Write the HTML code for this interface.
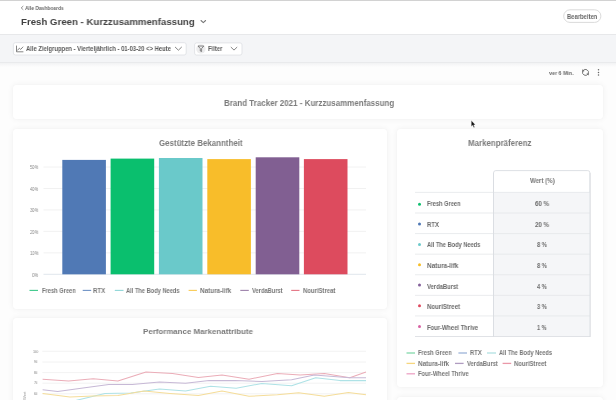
<!DOCTYPE html>
<html><head><meta charset="utf-8">
<style>
html,body{margin:0;padding:0;}
body{width:616px;height:400px;overflow:hidden;position:relative;background:#fdfdfd;font-family:"Liberation Sans",sans-serif;}
.t{position:absolute;white-space:pre;line-height:1;transform-origin:0 0;will-change:transform;}
.card{position:absolute;background:#fff;border-radius:3px;box-shadow:0 0 1px rgba(0,0,0,0.06),0 0 6px rgba(0,0,0,0.06);}
svg{position:absolute;left:0;top:0;}
</style></head><body>
<div style="position:absolute;left:0;top:0;width:616px;height:1px;background:#d2d2d2"></div>
<div style="position:absolute;left:0;top:1px;width:616px;height:33px;background:#fff"></div>
<div style="position:absolute;left:0;top:34px;width:616px;height:27px;background:#f4f5f7;border-top:1px solid #e7e8ea;border-bottom:1px solid #e9eaec"></div>
<div style="position:absolute;left:0;top:63px;width:616px;height:4px;background:linear-gradient(#f2f3f4,#fdfdfd)"></div>

<div class="card" style="left:13px;top:84.5px;width:590px;height:34px"></div>
<div class="card" style="left:13px;top:129px;width:374px;height:179.5px"></div>
<div class="card" style="left:397px;top:129px;width:206px;height:258px"></div>
<div class="card" style="left:13px;top:318px;width:374px;height:120px"></div>
<div class="card" style="left:397px;top:397px;width:206px;height:40px"></div>


<svg width="616" height="400" viewBox="0 0 616 400">
 <rect x="563.7" y="9.8" width="37.2" height="12.6" rx="6.3" fill="#fff" stroke="#d6d6d6" stroke-width="0.9"/>
 <rect x="13.4" y="42.7" width="172.8" height="12.3" rx="2" fill="#fff" stroke="#e0e2e5" stroke-width="0.9"/>
 <rect x="194.6" y="42.9" width="47.4" height="12.2" rx="2" fill="#fff" stroke="#e0e2e5" stroke-width="0.9"/>
 <g fill="none" stroke-linecap="round" stroke-linejoin="round">
  <!-- back chevron -->
  <path d="M23 6.3 L21.2 7.9 L23 9.5" stroke="#777" stroke-width="0.8"/>
  <!-- title chevron -->
  <path d="M201 20.5 L203.3 22.6 L205.6 20.5" stroke="#777" stroke-width="1.05"/>
  <!-- chart icon -->
  <path d="M16.5 46 V51.8 H23" stroke="#666" stroke-width="0.8"/>
  <path d="M17.6 50.2 L19.4 48.2 L20.7 49.4 L22.9 47" stroke="#666" stroke-width="0.8"/>
  <!-- dropdown chevrons -->
  <path d="M175.3 47.2 L178.4 50.2 L181.5 47.2" stroke="#666" stroke-width="0.8"/>
  <path d="M231.1 47.3 L234 50.1 L236.9 47.3" stroke="#666" stroke-width="0.8"/>
 </g>
 <!-- funnel -->
 <circle cx="200.9" cy="48.9" r="4.7" fill="#ececed"/>
 <path d="M198 46 H203.8 L201.6 48.6 V51.6 L200.3 51 V48.6 Z" fill="none" stroke="#6a6a6a" stroke-width="0.8" stroke-linejoin="round"/>
 <!-- refresh -->
 <g fill="none" stroke="#6a6a6a" stroke-width="0.9">
  <path d="M583.14 70.55 A3.0 3.0 0 0 1 588.28 73.52"/>
  <path d="M587.86 74.25 A3.0 3.0 0 0 1 582.72 71.28"/>
 </g>
 <path d="M582.09 71.89 L582.36 69.19 L584.64 70.97 Z" fill="#6a6a6a"/>
 <path d="M588.91 72.91 L588.64 75.61 L586.36 73.83 Z" fill="#6a6a6a"/>
 <!-- kebab -->
 <g fill="#666"><circle cx="598.5" cy="69.7" r="0.75"/><circle cx="598.5" cy="72.4" r="0.75"/><circle cx="598.5" cy="75.1" r="0.75"/></g>

 <!-- bar chart grid -->
 <g stroke="#eeeeee" stroke-width="0.8">
  <line x1="43.5" x2="366" y1="252.85" y2="252.85"/>
  <line x1="43.5" x2="366" y1="231.4" y2="231.4"/>
  <line x1="43.5" x2="366" y1="209.95" y2="209.95"/>
  <line x1="43.5" x2="366" y1="188.5" y2="188.5"/>
  <line x1="43.5" x2="366" y1="167.05" y2="167.05"/>
 </g>
 <line x1="43.5" x2="366" y1="274.3" y2="274.3" stroke="#dde3ea" stroke-width="0.9"/>
 <rect x="62.3" y="159.9" width="43.6" height="114.4" fill="#5079b5"/>
 <rect x="110.6" y="158.6" width="43.6" height="115.7" fill="#0abf6e"/>
 <rect x="158.9" y="158.0" width="43.6" height="116.3" fill="#6ac9ca"/>
 <rect x="207.3" y="159.1" width="43.6" height="115.2" fill="#f8bd2a"/>
 <rect x="255.7" y="157.3" width="43.6" height="117.0" fill="#815f92"/>
 <rect x="303.9" y="159.1" width="43.6" height="115.2" fill="#dd4b5e"/>
 <!-- legend bar chart -->
 <g stroke-width="1.1">
  <line x1="29.5" x2="38" y1="290.4" y2="290.4" stroke="#3ec98b"/>
  <line x1="82.7" x2="91.2" y1="290.4" y2="290.4" stroke="#6f93c6"/>
  <line x1="114.8" x2="123.5" y1="290.4" y2="290.4" stroke="#8fd6d7"/>
  <line x1="188.6" x2="196.9" y1="290.4" y2="290.4" stroke="#f9cb55"/>
  <line x1="240.3" x2="248.8" y1="290.4" y2="290.4" stroke="#9d82ab"/>
  <line x1="291.2" x2="299.5" y1="290.4" y2="290.4" stroke="#e47383"/>
 </g>

 <!-- table -->
 <path d="M493.5 336.5 V173 Q493.5 170.6 495.9 170.6 H587.6 Q590 170.6 590 173 V336.5" fill="#fff" stroke="#d9dde1" stroke-width="0.9"/>
 <rect x="493.5" y="192.4" width="96.5" height="144.1" fill="#f5f6f8"/>
 <g stroke="#e4e7ea" stroke-width="0.8">
  <line x1="415" x2="590" y1="192.4" y2="192.4"/>
  <line x1="415" x2="590" y1="212.99" y2="212.99"/>
  <line x1="415" x2="590" y1="233.58" y2="233.58"/>
  <line x1="415" x2="590" y1="254.17" y2="254.17"/>
  <line x1="415" x2="590" y1="274.76" y2="274.76"/>
  <line x1="415" x2="590" y1="295.35" y2="295.35"/>
  <line x1="415" x2="590" y1="315.94" y2="315.94"/>
 </g>
 <line x1="415" x2="590.4" y1="336.5" y2="336.5" stroke="#dcdfe3" stroke-width="0.9"/>
 <line x1="493.5" x2="493.5" y1="173" y2="336.9" stroke="#d9dde1" stroke-width="0.9"/>
 <line x1="590" x2="590" y1="173" y2="336.9" stroke="#d9dde1" stroke-width="0.9"/>
 <g>
  <circle cx="419.5" cy="204.3" r="1.5" fill="#10c070"/>
  <circle cx="419.5" cy="224.0" r="1.5" fill="#4f78b5"/>
  <circle cx="419.5" cy="244.4" r="1.5" fill="#6ccacb"/>
  <circle cx="419.5" cy="264.8" r="1.5" fill="#f7bd25"/>
  <circle cx="419.5" cy="285.0" r="1.5" fill="#83609a"/>
  <circle cx="419.5" cy="305.8" r="1.5" fill="#de4a5f"/>
  <circle cx="419.5" cy="326.6" r="1.5" fill="#d862a3"/>
 </g>
 <!-- legend table -->
 <g stroke-width="1.3">
  <line x1="406.5" x2="415" y1="353" y2="353" stroke="#82d8aa"/>
  <line x1="458.4" x2="467" y1="353" y2="353" stroke="#9db4d8"/>
  <line x1="487" x2="496" y1="353" y2="353" stroke="#b1e0e2"/>
  <line x1="406.5" x2="415" y1="363.4" y2="363.4" stroke="#f6d67e"/>
  <line x1="455" x2="463.6" y1="363.4" y2="363.4" stroke="#b09cc0"/>
  <line x1="502.6" x2="511.2" y1="363.4" y2="363.4" stroke="#ea98a8"/>
  <line x1="406.5" x2="415" y1="373.8" y2="373.8" stroke="#eca2c4"/>
 </g>

 <!-- line chart grid -->
 <g stroke="#efefef" stroke-width="0.8">
  <line x1="42.4" x2="366" y1="351.3" y2="351.3"/>
  <line x1="42.4" x2="366" y1="362" y2="362"/>
  <line x1="42.4" x2="366" y1="372.6" y2="372.6"/>
  <line x1="42.4" x2="366" y1="383.2" y2="383.2"/>
  <line x1="42.4" x2="366" y1="393.8" y2="393.8"/>
 </g>
 <g fill="none" stroke-width="1.05" stroke-linejoin="round">
  <polyline stroke="#ebadb8" points="42.6,379.3 68.6,381.1 93.2,378.8 117.9,381.1 146,372 172.5,373.6 198.4,377.5 222,375 249,379.2 277.4,373.5 300.1,375 324.3,373.5 349.8,377.8 366,372.1"/>
  <polyline stroke="#c7b9d6" points="42.6,389.7 57.7,391.5 83,388 108.8,384.5 132.2,384.5 159.5,381.9 185.5,383.2 209.2,380.6 234.8,380.6 262,381.5 291.6,379.8 314.3,375 349.8,377.8 366,377.8"/>
  <polyline stroke="#aee2e6" points="74,401 77.7,400 104.9,393.6 130.9,393 159.5,388.9 185.5,391 210.6,386.3 236.2,388.3 261.8,383.5 291.6,385.7 315.7,377.8 339.9,380.6 366,380.6"/>
  <polyline stroke="#f5dd9a" points="42.6,393.6 69.9,397 93,396 117.9,395.6 143.9,391 170,393.5 198.4,395.6 222,391.1 249,396.3 277.4,394.8 298.7,392.8 324.3,396.3 348.4,392.6 366,394.8"/>
 </g>
 <!-- cursor -->
 <path d="M471.3 120.6 L471.3 126.4 L472.6 125.2 L473.8 127.6 L474.7 127.2 L473.6 124.9 L475.3 124.7 Z" fill="#111" stroke="#fff" stroke-width="0.3"/>
</svg>
<div class="t" style="left:22.5px;top:400px;font-size:4px;font-weight:normal;color:#999;transform:rotate(-90deg)">Wert</div>
<div class="t" style="left:25.05px;top:5.70px;font-size:5.65px;font-weight:bold;color:#686868;transform:scaleX(0.8710);">Alle Dashboards</div>
<div class="t" style="left:21.22px;top:17.45px;font-size:9.71px;font-weight:bold;color:#424242;transform:scaleX(0.9947);">Fresh Green - Kurzzusammenfassung</div>
<div class="t" style="left:567.39px;top:13.93px;font-size:6.67px;font-weight:bold;color:#686868;transform:scaleX(0.8810);">Bearbeiten</div>
<div class="t" style="left:26.02px;top:46.03px;font-size:6.67px;font-weight:bold;color:#5a5a5a;transform:scaleX(0.8811);">Alle Zielgruppen - Vierteljährlich - 01-03-20 &lt;&gt; Heute</div>
<div class="t" style="left:208.49px;top:46.03px;font-size:6.67px;font-weight:bold;color:#5e5e5e;transform:scaleX(0.8835);">Filter</div>
<div class="t" style="left:548.85px;top:70.77px;font-size:5.80px;font-weight:bold;color:#6a6a6a;transform:scaleX(0.9215);">ver 6 Min.</div>
<div class="t" style="left:223.74px;top:99.03px;font-size:8.55px;font-weight:bold;color:#7b7b7b;transform:scaleX(0.9328);">Brand Tracker 2021 - Kurzzusammenfassung</div>
<div class="t" style="left:158.58px;top:139.49px;font-size:8.84px;font-weight:bold;color:#7b7b7b;transform:scaleX(0.8965);">Gestützte Bekanntheit</div>
<div class="t" style="left:468.45px;top:138.91px;font-size:8.70px;font-weight:bold;color:#7b7b7b;transform:scaleX(0.9113);">Markenpräferenz</div>
<div class="t" style="left:143.35px;top:327.70px;font-size:8.12px;font-weight:bold;color:#7b7b7b;transform:scaleX(0.9757);">Performance Markenattribute</div>
<div class="t" style="left:32.32px;top:272.59px;font-size:5.07px;font-weight:normal;color:#858585;transform:scaleX(0.8634);">0%</div>
<div class="t" style="left:30.16px;top:251.14px;font-size:5.07px;font-weight:normal;color:#858585;transform:scaleX(0.8345);">10%</div>
<div class="t" style="left:30.29px;top:229.69px;font-size:5.07px;font-weight:normal;color:#858585;transform:scaleX(0.8214);">20%</div>
<div class="t" style="left:30.33px;top:208.24px;font-size:5.07px;font-weight:normal;color:#858585;transform:scaleX(0.8172);">30%</div>
<div class="t" style="left:30.42px;top:186.79px;font-size:5.07px;font-weight:normal;color:#858585;transform:scaleX(0.8088);">40%</div>
<div class="t" style="left:30.33px;top:165.34px;font-size:5.07px;font-weight:normal;color:#858585;transform:scaleX(0.8172);">50%</div>
<div class="t" style="left:41.50px;top:287.96px;font-size:6.52px;font-weight:bold;color:#777;transform:scaleX(0.8785);">Fresh Green</div>
<div class="t" style="left:92.57px;top:287.96px;font-size:6.52px;font-weight:bold;color:#777;transform:scaleX(0.9344);">RTX</div>
<div class="t" style="left:126.13px;top:287.96px;font-size:6.52px;font-weight:bold;color:#777;transform:scaleX(0.8753);">All The Body Needs</div>
<div class="t" style="left:199.86px;top:287.96px;font-size:6.52px;font-weight:bold;color:#777;transform:scaleX(0.9729);">Natura-lifk</div>
<div class="t" style="left:252.14px;top:287.96px;font-size:6.52px;font-weight:bold;color:#777;transform:scaleX(0.8778);">VerdaBurst</div>
<div class="t" style="left:302.98px;top:287.96px;font-size:6.52px;font-weight:bold;color:#777;transform:scaleX(0.9126);">NouriStreat</div>
<div class="t" style="left:427.00px;top:201.25px;font-size:6.52px;font-weight:bold;color:#6a6a6a;transform:scaleX(0.8731);">Fresh Green</div>
<div class="t" style="left:534.70px;top:201.25px;font-size:6.52px;font-weight:bold;color:#6a6a6a;transform:scaleX(0.9505);">60 %</div>
<div class="t" style="left:426.98px;top:221.84px;font-size:6.52px;font-weight:bold;color:#6a6a6a;transform:scaleX(0.9184);">RTX</div>
<div class="t" style="left:534.76px;top:221.84px;font-size:6.52px;font-weight:bold;color:#6a6a6a;transform:scaleX(0.9462);">20 %</div>
<div class="t" style="left:427.23px;top:242.43px;font-size:6.52px;font-weight:bold;color:#6a6a6a;transform:scaleX(0.8720);">All The Body Needs</div>
<div class="t" style="left:536.88px;top:242.43px;font-size:6.52px;font-weight:bold;color:#6a6a6a;transform:scaleX(0.8723);">8 %</div>
<div class="t" style="left:426.95px;top:263.02px;font-size:6.52px;font-weight:bold;color:#6a6a6a;transform:scaleX(0.9760);">Natura-lifk</div>
<div class="t" style="left:536.88px;top:263.02px;font-size:6.52px;font-weight:bold;color:#6a6a6a;transform:scaleX(0.8723);">8 %</div>
<div class="t" style="left:427.34px;top:283.61px;font-size:6.52px;font-weight:bold;color:#6a6a6a;transform:scaleX(0.8952);">VerdaBurst</div>
<div class="t" style="left:536.99px;top:283.61px;font-size:6.52px;font-weight:bold;color:#6a6a6a;transform:scaleX(0.8619);">4 %</div>
<div class="t" style="left:426.98px;top:304.20px;font-size:6.52px;font-weight:bold;color:#6a6a6a;transform:scaleX(0.9297);">NouriStreet</div>
<div class="t" style="left:536.94px;top:304.20px;font-size:6.52px;font-weight:bold;color:#6a6a6a;transform:scaleX(0.8671);">3 %</div>
<div class="t" style="left:426.99px;top:324.79px;font-size:6.52px;font-weight:bold;color:#6a6a6a;transform:scaleX(0.8931);">Four-Wheel Thrive</div>
<div class="t" style="left:536.97px;top:324.79px;font-size:6.52px;font-weight:bold;color:#6a6a6a;transform:scaleX(0.8415);">1 %</div>
<div class="t" style="left:530.00px;top:178.33px;font-size:6.67px;font-weight:bold;color:#777;transform:scaleX(0.9135);">Wert (%)</div>
<div class="t" style="left:417.80px;top:350.16px;font-size:6.52px;font-weight:bold;color:#777;transform:scaleX(0.8785);">Fresh Green</div>
<div class="t" style="left:470.19px;top:350.16px;font-size:6.52px;font-weight:bold;color:#777;transform:scaleX(0.8944);">RTX</div>
<div class="t" style="left:498.53px;top:350.16px;font-size:6.52px;font-weight:bold;color:#777;transform:scaleX(0.8670);">All The Body Needs</div>
<div class="t" style="left:417.76px;top:360.56px;font-size:6.52px;font-weight:bold;color:#777;transform:scaleX(0.9634);">Natura-lifk</div>
<div class="t" style="left:467.44px;top:360.56px;font-size:6.52px;font-weight:bold;color:#777;transform:scaleX(0.8865);">VerdaBurst</div>
<div class="t" style="left:513.88px;top:360.56px;font-size:6.52px;font-weight:bold;color:#777;transform:scaleX(0.9126);">NouriStreet</div>
<div class="t" style="left:417.80px;top:370.96px;font-size:6.52px;font-weight:bold;color:#777;transform:scaleX(0.8860);">Four-Wheel Thrive</div>
<div class="t" style="left:34.44px;top:393.10px;font-size:3.77px;font-weight:normal;color:#858585;transform:scaleX(0.8326);">60</div>
<div class="t" style="left:34.44px;top:382.48px;font-size:3.77px;font-weight:normal;color:#858585;transform:scaleX(0.8326);">70</div>
<div class="t" style="left:34.48px;top:371.86px;font-size:3.77px;font-weight:normal;color:#858585;transform:scaleX(0.8245);">80</div>
<div class="t" style="left:34.44px;top:361.24px;font-size:3.77px;font-weight:normal;color:#858585;transform:scaleX(0.8326);">90</div>
<div class="t" style="left:32.96px;top:350.62px;font-size:3.77px;font-weight:normal;color:#858585;transform:scaleX(0.7876);">100</div>
</body></html>
